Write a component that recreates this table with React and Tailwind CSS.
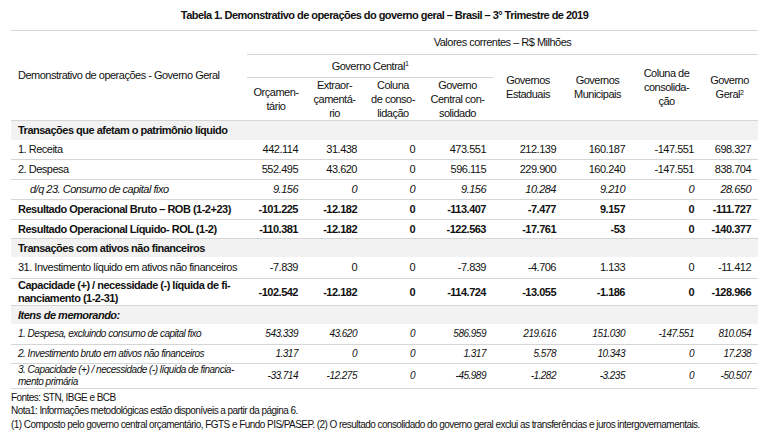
import React from "react";

const rows = [
  { type: "band", label: "Transações que afetam o patrimônio líquido", h: "h-[20px]" },
  { label: "1. Receita", v: ["442.114", "31.438", "0", "473.551", "212.139", "160.187", "-147.551", "698.327"], h: "h-[19px]" },
  { label: "2. Despesa", v: ["552.495", "43.620", "0", "596.115", "229.900", "160.240", "-147.551", "838.704"], h: "h-[20px]" },
  { label: "d/q 23. Consumo de capital fixo", italic: true, indent: true, v: ["9.156", "0", "0", "9.156", "10.284", "9.210", "0", "28.650"], h: "h-[20px]" },
  { label: "Resultado Operacional Bruto – ROB (1-2+23)", bold: true, v: ["-101.225", "-12.182", "0", "-113.407", "-7.477", "9.157", "0", "-111.727"], h: "h-[20px]" },
  { label: "Resultado Operacional Líquido- ROL (1-2)", bold: true, v: ["-110.381", "-12.182", "0", "-122.563", "-17.761", "-53", "0", "-140.377"], h: "h-[19px]" },
  { type: "band", label: "Transações com ativos não financeiros", h: "h-[19px]" },
  { label: "31. Investimento líquido em ativos não financeiros", v: ["-7.839", "0", "0", "-7.839", "-4.706", "1.133", "0", "-11.412"], h: "h-[21px]" },
  { label: ["Capacidade (+) / necessidade (-) líquida de fi-", "nanciamento (1-2-31)"], bold: true, v: ["-102.542", "-12.182", "0", "-114.724", "-13.055", "-1.186", "0", "-128.966"], h: "h-[27px]" },
  { type: "band", label: "Itens de memorando:", italic: true, h: "h-[19px]" },
  { label: "1. Despesa, excluindo consumo de capital fixo", memo: true, v: ["543.339", "43.620", "0", "586.959", "219.616", "151.030", "-147.551", "810.054"], h: "h-[20px]" },
  { label: "2. Investimento bruto em ativos não financeiros", memo: true, v: ["1.317", "0", "0", "1.317", "5.578", "10.343", "0", "17.238"], h: "h-[19px]" },
  { label: ["3. Capacidade (+) / necessidade (-) líquida de financia-", "mento primária"], memo: true, v: ["-33.714", "-12.275", "0", "-45.989", "-1.282", "-3.235", "0", "-50.507"], h: "h-[24px]" },
];

const widths = [236, 58, 59, 58, 71, 70, 69, 69, 57];

export default function App() {
  return (
    <div className="w-[767px] h-[440px] overflow-hidden bg-white text-[#111] font-['Liberation_Sans',Arial,sans-serif]">
      <div className="ml-[11px] w-[747px]">
        <div className="h-[31px] border-b border-[#d6d6d6] flex items-center justify-center text-[11px] tracking-[-0.55px] font-bold">
          Tabela 1. Demonstrativo de operações do governo geral – Brasil – 3° Trimestre de 2019
        </div>
        <table className="table-fixed border-collapse w-[747px] text-[11px] tracking-[-0.5px] leading-[14px]">
          <colgroup>
            {widths.map((w, i) => (
              <col key={i} style={{ width: w }} />
            ))}
          </colgroup>
          <thead>
            <tr className="h-[23px]">
              <th rowSpan={3} className="font-normal text-left pl-[7px] border-b border-[#d6d6d6]">
                Demonstrativo de operações - Governo Geral
              </th>
              <th colSpan={8} className="font-normal border-b border-[#d6d6d6]">
                Valores correntes – R$ Milhões
              </th>
            </tr>
            <tr className="h-[23px]">
              <th colSpan={4} className="font-normal border-b border-[#d6d6d6]">
                Governo Central<sup className="text-[7px]">1</sup>
              </th>
              <th rowSpan={2} className="font-normal border-b border-[#d6d6d6]">Governos<br />Estaduais</th>
              <th rowSpan={2} className="font-normal border-b border-[#d6d6d6]">Governos<br />Municipais</th>
              <th rowSpan={2} className="font-normal border-b border-[#d6d6d6]">Coluna de<br />consolida-<br />ção</th>
              <th rowSpan={2} className="font-normal border-b border-[#d6d6d6]">Governo<br />Geral<sup className="text-[7px]">2</sup></th>
            </tr>
            <tr className="h-[42px]">
              <th className="font-normal border-b border-[#d6d6d6]">Orçamen-<br />tário</th>
              <th className="font-normal border-b border-[#d6d6d6]">Extraor-<br />çamentá-<br />rio</th>
              <th className="font-normal border-b border-[#d6d6d6]">Coluna<br />de conso-<br />lidação</th>
              <th className="font-normal border-b border-[#d6d6d6]">Governo<br />Central con-<br />solidado</th>
            </tr>
          </thead>
          <tbody>
            {rows.map((r, i) => {
              if (r.type === "band") {
                return (
                  <tr key={i} className={`${r.h} bg-[#f2f2f2]`}>
                    <td colSpan={9} className={`pl-[7px] font-bold ${r.italic ? "italic" : ""}`}>
                      {r.label}
                    </td>
                  </tr>
                );
              }
              const style = r.bold
                ? "font-bold"
                : r.italic
                ? "italic"
                : r.memo
                ? "italic text-[10px] tracking-[-0.5px] leading-[12px]"
                : "";
              const label = Array.isArray(r.label) ? (
                <>
                  {r.label[0]}
                  <br />
                  {r.label[1]}
                </>
              ) : (
                r.label
              );
              return (
                <tr key={i} className={`${r.h} border-b border-[#d6d6d6] ${style}`}>
                  <td className={`whitespace-nowrap ${r.indent ? "pl-[19px]" : "pl-[7px]"} ${r.bold && Array.isArray(r.label) ? "leading-[13px]" : ""}`}>
                    {label}
                  </td>
                  {r.v.map((n, j) => (
                    <td key={j} className="text-right pr-[7px]">
                      {n}
                    </td>
                  ))}
                </tr>
              );
            })}
          </tbody>
        </table>
        <div className="text-[10px] tracking-[-0.55px] leading-[13.5px] pt-[2px]">
          <div>Fontes: STN, IBGE e BCB</div>
          <div>Nota1: Informações metodológicas estão disponíveis a partir da página 6.</div>
          <div>(1) Composto pelo governo central orçamentário, FGTS e Fundo PIS/PASEP. (2) O resultado consolidado do governo geral exclui as transferências e juros intergovernamentais.</div>
        </div>
      </div>
    </div>
  );
}
